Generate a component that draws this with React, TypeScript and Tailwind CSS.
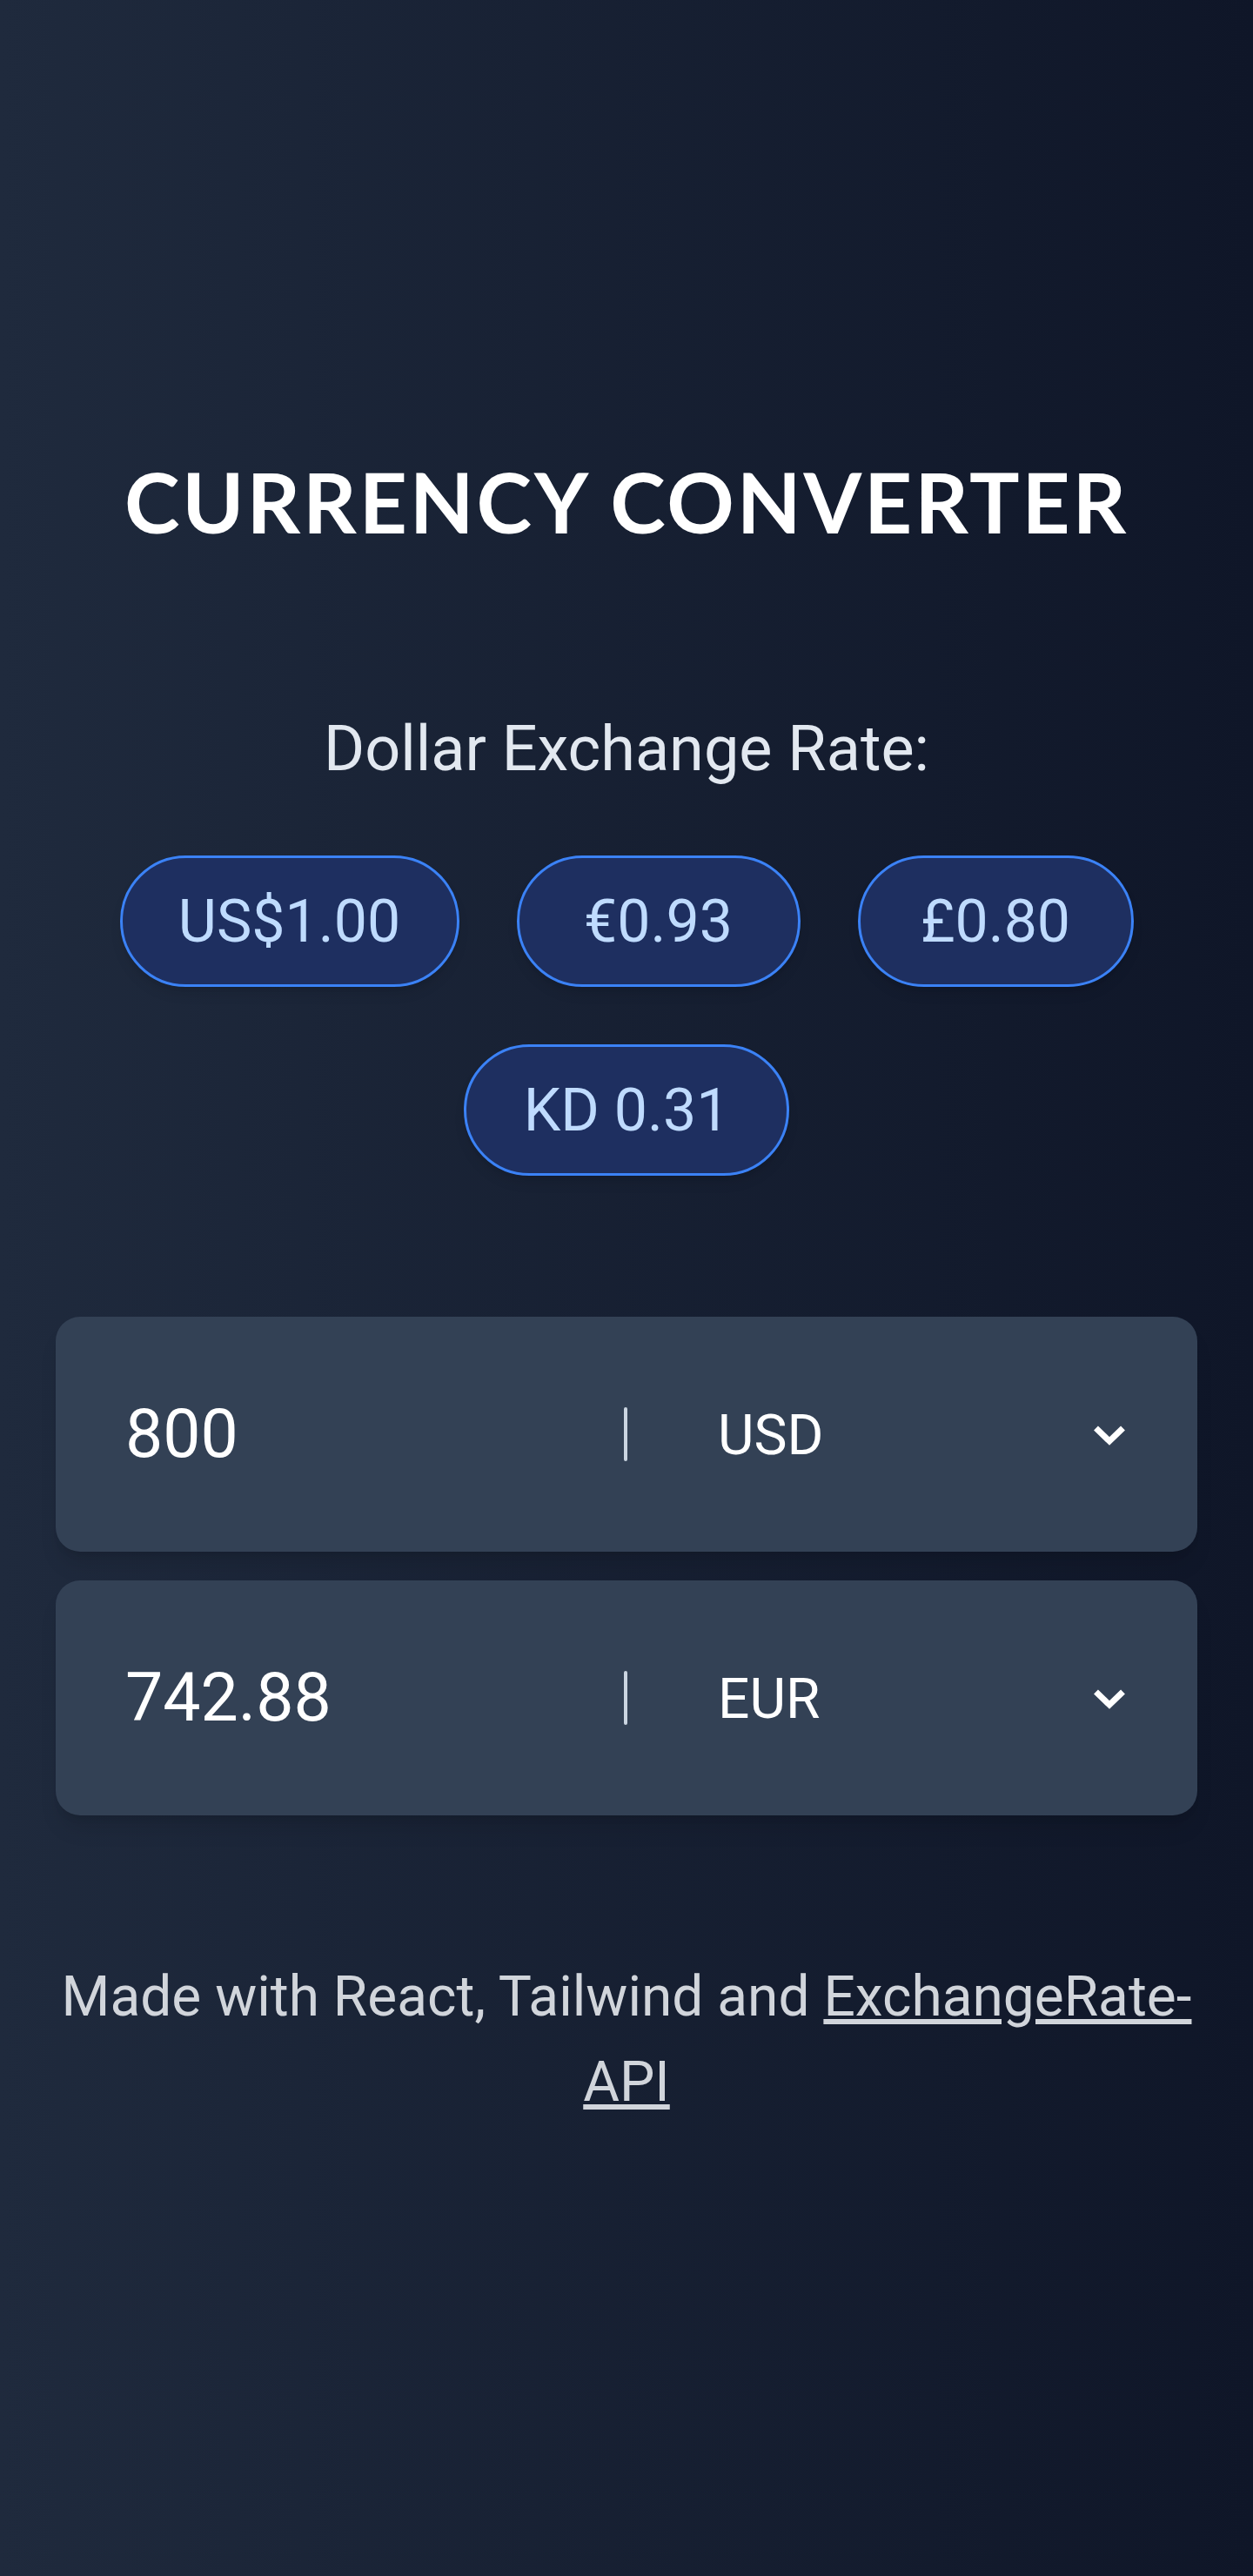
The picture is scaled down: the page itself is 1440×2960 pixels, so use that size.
import React from "react";

const rates = [
  { label: "US$1.00", w: "w-[390px]" },
  { label: "€0.93", w: "w-[326px]" },
  { label: "£0.80", w: "w-[317px]" },
  { label: "KD 0.31", w: "w-[374px]" },
];

function Chevron() {
  return (
    <svg width="38" height="28" viewBox="0 0 38 28" fill="none" className="ml-auto mt-[3px]">
      <polyline
        points="3.5,5 19,20 34.5,5"
        stroke="white"
        strokeWidth="7"
        strokeLinecap="butt"
        strokeLinejoin="miter"
      />
    </svg>
  );
}

function Row({ value, cur }: { value: string; cur: string }) {
  return (
    <div className="flex items-center h-[270px] w-[1312px] rounded-[28px] bg-[#334155] pl-[80px] pr-[82px] shadow-xl">
      <div className="flex-1 min-w-0">
        <input
          readOnly
          value={value}
          className="w-full bg-transparent outline-none text-white text-[77px] leading-[77px] font-['Roboto',sans-serif]"
        />
      </div>
      <div className="w-[4px] h-[62px] bg-[#cbd5e1] rounded-sm" />
      <div className="flex items-center w-[573px] pl-[104px]">
        <span className="text-white text-[64px] leading-[64px] mt-[3px] font-['Roboto',sans-serif]">{cur}</span>
        <Chevron />
      </div>
    </div>
  );
}

export default function App() {
  return (
    <div className="min-h-screen w-full flex flex-col items-center pt-[528px] bg-linear-to-r from-[#1f2a3d] to-[#0f1628] font-['Roboto',sans-serif]">
      <h1 className="text-white font-['Lato',sans-serif] font-bold text-[96px] leading-[96px] tracking-[0.03em]">
        CURRENCY CONVERTER
      </h1>
      <p className="mt-[201px] text-[#e2e8f0] text-[72px] leading-[72px]">Dollar Exchange Rate:</p>
      <div className="mt-[86px] w-[1312px] flex flex-wrap justify-center gap-[66px]">
        {rates.map((r) => (
          <div
            key={r.label}
            className={`${r.w} h-[151px] flex items-center justify-center rounded-full border-[3px] border-[#3b82f6] bg-[#1e2f60] shadow-lg`}
          >
            <span className="text-[#bfdbfe] text-[68px] leading-[68px]">{r.label}</span>
          </div>
        ))}
      </div>
      <div className="mt-[162px] flex flex-col gap-[33px]">
        <Row value="800" cur="USD" />
        <Row value="742.88" cur="EUR" />
      </div>
      <p className="mt-[160px] w-[1340px] text-center text-[#d1d5db] text-[64px] leading-[98px]">
        Made with React, Tailwind and{" "}
        <a href="#" className="underline">
          ExchangeRate-API
        </a>
      </p>
    </div>
  );
}
